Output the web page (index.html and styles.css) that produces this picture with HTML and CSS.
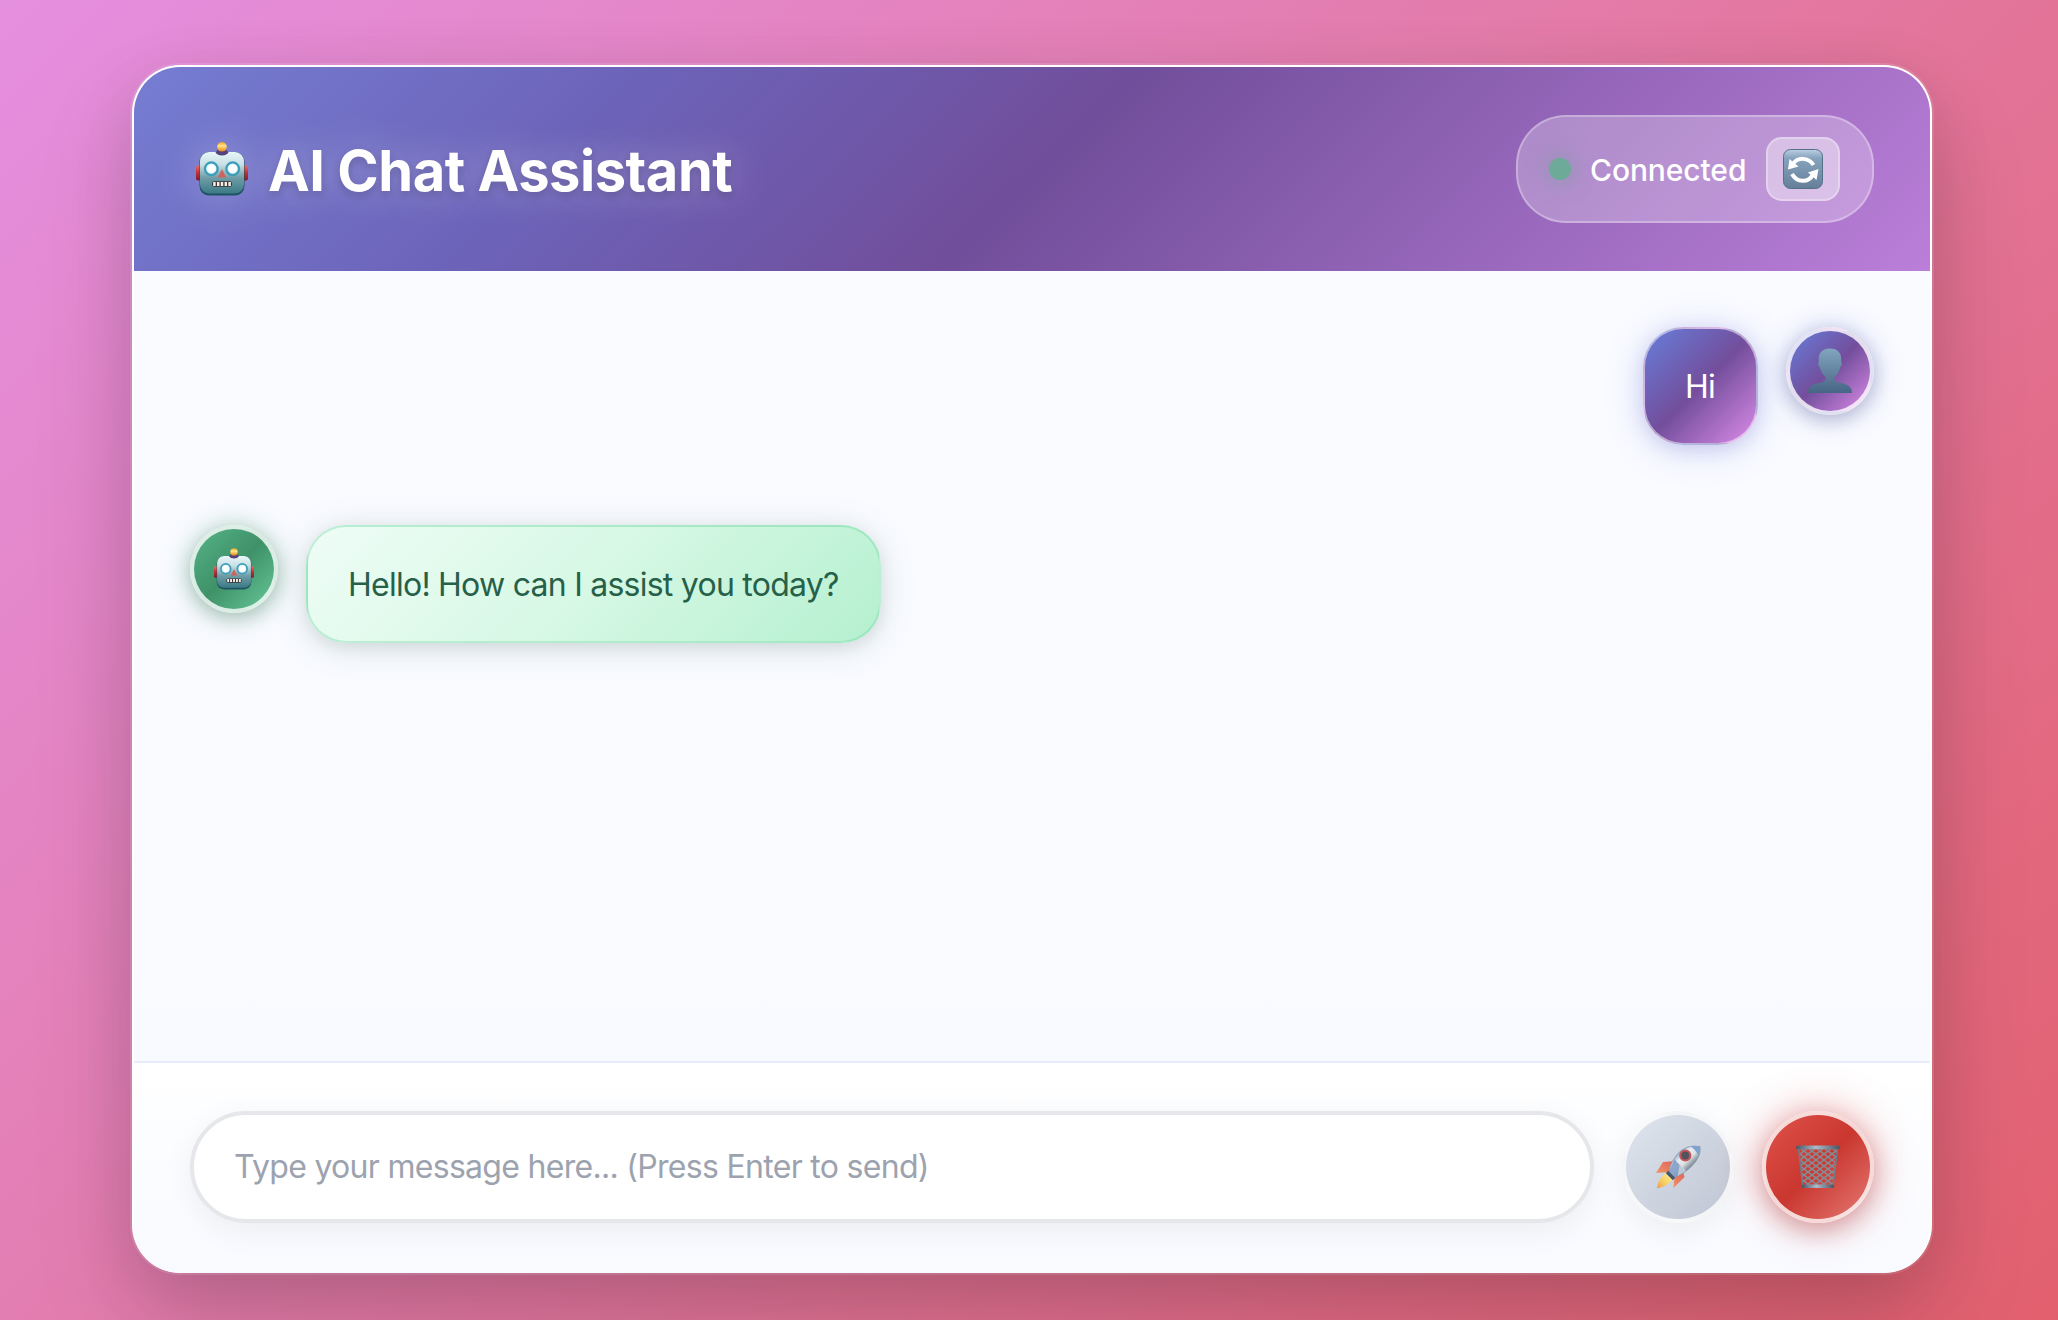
FILE: index.html
```html
<!DOCTYPE html>
<html lang="en">
<head>
<meta charset="utf-8">
<title>AI Chat Assistant</title>
<link rel="stylesheet" href="styles.css">
</head>
<body>
<svg class="defs" aria-hidden="true">
  <defs>
    <linearGradient id="face" x1="0" y1="0" x2="0" y2="1"><stop offset="0" stop-color="#e8f7f8"/><stop offset=".3" stop-color="#c9e0e5"/><stop offset=".62" stop-color="#6f9da7"/><stop offset="1" stop-color="#3a7a86"/></linearGradient>
    <linearGradient id="ball" x1="0" y1="0" x2="0" y2="1"><stop offset="0" stop-color="#f0a020"/><stop offset=".4" stop-color="#ffe68a"/><stop offset="1" stop-color="#e8860c"/></linearGradient>
    <linearGradient id="ear" x1="0" y1="0" x2="0" y2="1"><stop offset="0" stop-color="#e86a62"/><stop offset=".5" stop-color="#bf2f34"/><stop offset="1" stop-color="#7c1c2a"/></linearGradient>
    <linearGradient id="tile" x1="0" y1="0" x2="0" y2="1"><stop offset="0" stop-color="#bcd0e0"/><stop offset=".22" stop-color="#86a3be"/><stop offset="1" stop-color="#657f99"/></linearGradient>
    <linearGradient id="person" x1="0" y1="0" x2="0" y2="1"><stop offset="0" stop-color="#82a5be"/><stop offset="1" stop-color="#476585"/></linearGradient>
    <linearGradient id="hull" gradientUnits="userSpaceOnUse" x1="20" y1="9" x2="34" y2="23"><stop offset="0" stop-color="#7d9cc4"/><stop offset=".4" stop-color="#e9ecef"/><stop offset=".7" stop-color="#dfe2e2"/><stop offset="1" stop-color="#8a96a2"/></linearGradient>
    <linearGradient id="flame" x1="1" y1="0" x2="0" y2="1"><stop offset="0" stop-color="#fff3a0"/><stop offset=".6" stop-color="#f6cf62"/><stop offset="1" stop-color="#ee9656"/></linearGradient>
    <linearGradient id="fin" x1="1" y1="0" x2="0" y2="1"><stop offset="0" stop-color="#e0605a"/><stop offset="1" stop-color="#f09468"/></linearGradient>
    <linearGradient id="rim" x1="0" y1="0" x2="1" y2="0"><stop offset="0" stop-color="#4b5563"/><stop offset=".45" stop-color="#a9bccb"/><stop offset="1" stop-color="#4b5563"/></linearGradient>
    <pattern id="mesh" width="8" height="6" patternUnits="userSpaceOnUse"><path d="M0 0L8 6M8 0L0 6" stroke="#868c95" stroke-width="1.5"/></pattern>
    <symbol id="robot" viewBox="0 0 52 54">
      <rect x="0" y="23.5" width="7" height="15" rx="2" fill="url(#ear)"/><rect x="45" y="23.5" width="7" height="15" rx="2" fill="url(#ear)"/>
      <rect x="3.5" y="10" width="45" height="43.5" rx="9.5" fill="#1f5361"/>
      <rect x="4" y="10" width="44" height="41.5" rx="9" fill="url(#face)"/>
      <path d="M19.500 10.500L22 7.500H30L32.500 10.500Q30.500 13.500 26 13.500T19.500 10.500z" fill="#55427c"/>
      <circle cx="26" cy="4.8" r="4.8" fill="url(#ball)"/>
      <circle cx="15.3" cy="26.7" r="6.3" fill="#e3fbff" stroke="#3d9cb8" stroke-width="2.3"/><circle cx="36.7" cy="26.7" r="6.3" fill="#e3fbff" stroke="#3d9cb8" stroke-width="2.3"/>
      <circle cx="15.3" cy="26.7" r="3.8" fill="#fff"/><circle cx="36.7" cy="26.7" r="3.8" fill="#fff"/>
      <path d="M26 27.2l4.3 8.2H21.7z" fill="#cf625e"/>
      <rect x="16" y="39.2" width="20" height="5.6" rx="2.4" fill="#3a3034"/>
      <path d="M18.4 40v4M22.2 40v4M26 40v4M29.8 40v4M33.6 40v4" stroke="#f3efe6" stroke-width="2.5"/>
    </symbol>
  </defs>
</svg>
<main class="card">
  <header class="header">
    <h1 class="title"><svg class="title-icon"><use href="#robot"/></svg><span class="title-text">AI Chat Assistant</span></h1>
    <div class="status">
      <span class="dot"></span>
      <span class="status-text">Connected</span>
      <button class="refresh" aria-label="Reconnect">
        <svg width="40" height="40" viewBox="0 0 40 40"><rect x=".5" y=".5" width="39" height="39" rx="7" fill="url(#tile)" stroke="#557089"/><g fill="none" stroke="#fff" stroke-width="4"><path d="M10 15C14.500 8 25.500 8 30.500 16"/><path d="M30 25.500C25.500 34 14 34 9 25"/></g><path d="M6.500 10L5 20.500L15.500 17.500z" fill="#fff"/><path d="M35.500 20L25 23.500L33.500 31z" fill="#fff"/></svg>
      </button>
    </div>
  </header>
  <section class="messages">
    <div class="message user">
      <div class="bubble">Hi</div>
      <div class="avatar"><svg width="44" height="46" viewBox="0 0 44 46"><path d="M0 45C0 38 5 36 13 34.500C18 33.500 18.500 31 17 28.500C14 26 12.500 22 11.500 18.500C9.800 17.500 9.800 15 10.800 14C10 5 14 .5 22 .5S34 5 33.200 14C34.200 15 34.200 17.500 32.500 18.500C31.500 22 30 26 27 28.500C25.500 31 26 33.500 31 34.500C39 36 44 38 44 45z" fill="url(#person)"/></svg></div>
    </div>
    <div class="message bot">
      <div class="avatar"><svg class="bot-icon"><use href="#robot"/></svg></div>
      <div class="bubble">Hello! How can I assist you today?</div>
    </div>
  </section>
  <footer class="composer">
    <input class="input" type="text" placeholder="Type your message here... (Press Enter to send)">
    <button class="round send" aria-label="Send">
      <svg width="46" height="46" viewBox="0 0 46 46"><path d="M21 17L8 18L1 29L16 28z" fill="url(#fin)"/><path d="M28 28L29.500 33L18.500 44L19.500 31z" fill="url(#fin)"/><path d="M12 28Q3 34 2 44.500Q13 42 18 35z" fill="url(#flame)"/><path d="M45 2.500Q31 0 22 10.500Q15.500 18 14 27L20 33Q29 30 36 23Q47 12 45 2.500z" fill="url(#hull)" stroke="#8592a3" stroke-width=".7"/><path d="M14 27L19.500 15.500L30 26.500L20 33z" fill="#6f90bf" opacity=".75"/><path d="M25 19L22.500 32L31 27z" fill="#d5dce3" opacity=".7"/><circle cx="30.300" cy="11.500" r="5" fill="#4f555f" stroke="#c65458" stroke-width="2.200"/><path d="M35 2.200Q40 1.700 45 2.500Q45.600 7 43.500 12Q41 5.500 35 2.200z" fill="#7da3d2"/><path d="M12 28L19 35" stroke="#3f566f" stroke-width="3.200"/></svg>
    </button>
    <button class="round clear" aria-label="Clear chat">
      <svg width="44" height="44" viewBox="0 0 44 44"><path d="M3 3L7 42H37L41 3z" fill="url(#mesh)"/><path d="M2.500 3L7 42M41.500 3L37 42" stroke="#727b88" stroke-width="1.600"/><rect x="6" y="39.500" width="32" height="3.600" rx="1.200" fill="url(#rim)"/><rect x="0" y=".5" width="44" height="3.800" rx="1.900" fill="url(#rim)"/></svg>
    </button>
  </footer>
</main>
</body>
</html>
```
FILE: styles.css
```css
* { box-sizing: border-box; }
body {
  margin: 0;
  width: 2058px;
  height: 1320px;
  overflow: hidden;
  padding: 65px 126px 47px 132px;
  font-family: Inter, "Liberation Sans", sans-serif;
  background: linear-gradient(135deg, #e58fe0 0%, #e3779f 55%, #e2606e 100%);
}
.defs { position: absolute; width: 0; height: 0; }
button { font: inherit; padding: 0; }
svg { display: block; flex: none; }
.card {
  height: 1208px;
  display: flex;
  flex-direction: column;
  border: 2px solid #fff;
  border-bottom-width: 0;
  border-radius: 48px;
  overflow: hidden;
  background: #fafbff;
  box-shadow: 0 0 0 2px rgba(255, 255, 255, .12), 0 50px 100px rgba(0, 0, 0, .15), 0 16px 64px rgba(0, 0, 0, .1);
}
.header {
  height: 204px;
  flex: none;
  display: flex;
  align-items: center;
  justify-content: space-between;
  padding: 0 56px;
  color: #fff;
  background: linear-gradient(135deg, #757dd2 0%, #6c63b9 26%, #714e9b 50.5%, #bb7fd9 100%);
}
.title {
  margin: 0;
  display: flex;
  align-items: center;
  padding-left: 6px;
  gap: 20px;
  font-size: 56px;
  font-weight: 700;
  line-height: 68px;
  letter-spacing: -.48px;
  text-shadow: 0 4px 8px rgba(0, 0, 0, .16), 0 0 40px rgba(255, 255, 255, .38);
}
.title-text { padding-top: 3px; }
.title-icon { width: 52px; height: 54px; filter: drop-shadow(0 0 20px rgba(255, 255, 255, .25)); }
.status {
  height: 108px;
  display: flex;
  align-items: center;
  gap: 20px;
  padding: 0 32px;
  border: 2px solid rgba(255, 255, 255, .3);
  border-radius: 50px;
  background: rgba(255, 255, 255, .25);
}
.dot {
  width: 20px;
  height: 20px;
  border-radius: 50%;
  background: #6daa98;
  transform: scale(1.1);
  box-shadow: 0 0 20px rgba(90, 165, 135, .6);
}
.status-text {
  width: 156px;
  padding-top: 2px;
  font-size: 30px;
  font-weight: 500;
  letter-spacing: -.1px;
  white-space: nowrap;
}
.refresh {
  width: 74px;
  height: 64px;
  display: grid;
  place-items: center;
  border: 2px solid rgba(255, 255, 255, .3);
  border-radius: 16px;
  background: rgba(255, 255, 255, .4);
}
.messages {
  flex: 1;
  display: flex;
  flex-direction: column;
  gap: 80px;
  padding: 56px;
  background: linear-gradient(180deg, #fafbff, #f8faff);
}
.message { display: flex; align-items: flex-start; gap: 28px; }
.user { justify-content: flex-end; }
.bubble {
  height: 118px;
  padding: 1px 40px 0;
  border: 2px solid;
  border-radius: 40px;
  font-size: 32px;
  line-height: 114px;
  letter-spacing: -.75px;
  white-space: nowrap;
}
.user .bubble {
  width: 115px;
  color: #fff;
  border-color: rgba(255, 255, 255, .5);
  background: linear-gradient(135deg, #667eda 0%, #734e9c 50%, #dc8ce9 100%);
  box-shadow: 0 4px 36px rgba(102, 126, 234, .28), 0 4px 18px rgba(80, 70, 150, .15);
}
.bot .bubble {
  width: 575px;
  color: #276049;
  border-color: rgba(110, 215, 160, .38);
  background: linear-gradient(135deg, #effdf7 0%, #d6f8e4 50%, #b5f0d0 100%);
  box-shadow: 0 4px 34px rgba(60, 120, 95, .17), 0 5px 16px rgba(0, 0, 0, .08);
}
.avatar {
  width: 88px;
  height: 88px;
  flex: none;
  display: grid;
  place-items: center;
  border: 4px solid rgba(255, 255, 255, .8);
  border-radius: 50%;
}
.user .avatar {
  background: linear-gradient(135deg, #667eda 0%, #734e9c 50%, #dc8ce9 100%);
  box-shadow: 0 2px 28px rgba(70, 90, 200, .35), 0 6px 18px rgba(0, 0, 0, .14);
}
.bot .avatar {
  background: linear-gradient(135deg, #56b488 0%, #3f9168 50%, #66c99a 100%);
  box-shadow: 0 2px 28px rgba(55, 150, 100, .4), 0 6px 18px rgba(0, 0, 0, .15);
}
.bot-icon { width: 40px; height: 42px; }
.composer {
  height: 212px;
  flex: none;
  display: flex;
  align-items: flex-start;
  gap: 28px;
  padding: 48px 56px;
  border-top: 2px solid #e8ecfd;
  background: linear-gradient(180deg, #fff, #f8faff);
}
.input {
  flex: 1;
  min-width: 0;
  height: 112px;
  padding: 0 40px 2px;
  border: 4px solid #e5e7eb;
  border-radius: 56px;
  outline: 0;
  background: #fff;
  font: 32px Inter, "Liberation Sans", sans-serif;
  letter-spacing: -.7px;
  box-shadow: 0 8px 32px rgba(0, 0, 0, .06);
}
.input::placeholder { color: #9ca3af; opacity: 1; }
.round {
  width: 112px;
  height: 112px;
  flex: none;
  display: grid;
  place-items: center;
  border: 4px solid rgba(255, 255, 255, .8);
  border-radius: 50%;
}
.send {
  background: linear-gradient(135deg, #dfe5ed, #bfc5d3);
  box-shadow: 0 8px 32px rgba(0, 0, 0, .06);
}
.clear {
  background: linear-gradient(135deg, #df524c 0%, #c9372f 50%, #e57a74 100%);
  box-shadow: 0 0 44px rgba(230, 60, 55, .4), 0 8px 24px rgba(120, 20, 30, .28);
}
```
